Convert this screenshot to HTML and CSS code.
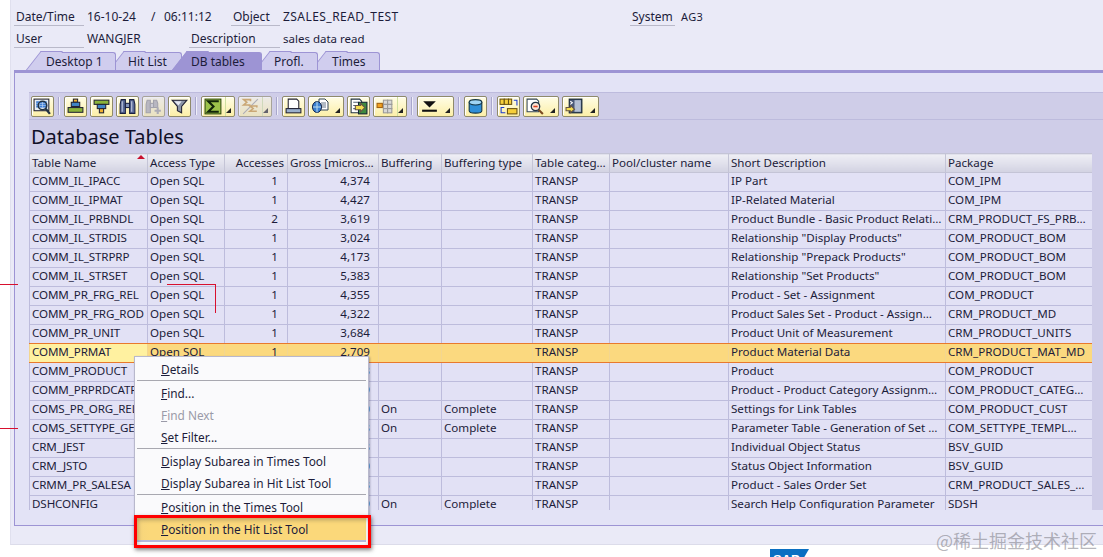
FILE: index.html
```html
<!DOCTYPE html>
<html lang="en">
<head>
<meta charset="utf-8">
<title>Database Tables</title>
<link rel="stylesheet" href="styles.css">
</head>
<body>
<div class="window">
  <header class="info">
    <div class="info-row">
      <span class="lbl w70">Date/Time</span><span class="val w64">16-10-24</span><span class="val w13">/</span><span class="val w67">06:11:12</span>
      <span class="lbl w49">Object</span><span class="val wide w349">ZSALES_READ_TEST</span>
      <span class="lbl w43">System</span><span class="val sys">AG3</span>
    </div>
    <div class="info-row">
      <span class="lbl w70">User</span><span class="val w102">WANGJER</span>
      <span class="lbl w91">Description</span><span class="val tight">sales data read</span>
    </div>
  </header>
  <nav class="tabs">
    <div class="tab t1"><span>Desktop 1</span></div>
    <div class="tab t2"><span>Hit List</span></div>
    <div class="tab t3 active"><span>DB tables</span></div>
    <div class="tab t4"><span>Profl.</span></div>
    <div class="tab t5"><span>Times</span></div>
  </nav>
  <section class="page">
    <div class="content">
      <div class="toolbar">
        <button class="tb"><svg width="19" height="17" viewBox="0 0 18 16"><rect x="1" y="1" width="14" height="11" fill="#e8eef4" stroke="#223" /><rect x="3" y="3" width="10" height="6" fill="#3f7fd6"/><path d="M3 5h10M3 7h10M6 3v6M9 3v6" stroke="#bcd4f2" stroke-width=".6"/><circle cx="9" cy="7" r="4" fill="none" stroke="#234" stroke-width="1.5"/><path d="M12 10l4 5" stroke="#234" stroke-width="2.200"/></svg></button>
        <i class="sep"></i>
        <button class="tb"><svg width="19" height="17" viewBox="0 0 18 16"><rect x="7" y="1" width="4" height="3" fill="#f0b030" stroke="#223"/><rect x="5" y="4" width="8" height="4" fill="#3f83c4" stroke="#223"/><rect x="2" y="9" width="14" height="4.500" fill="#8ab33a" stroke="#223"/></svg></button>
        <button class="tb"><svg width="19" height="17" viewBox="0 0 18 16"><rect x="2" y="2" width="14" height="4" fill="#8ab33a" stroke="#223"/><rect x="5" y="6" width="8" height="4" fill="#3f83c4" stroke="#223"/><rect x="7" y="10" width="4" height="4" fill="#f0b030" stroke="#223"/></svg></button>
        <button class="tb"><svg width="19" height="17" viewBox="0 0 18 16"><path d="M3 1.500h4v13H2V6zM11 1.500h4l1 4.500v8.500h-5z" fill="#5a6a9a" stroke="#1a2040"/><rect x="7" y="5" width="4" height="4" fill="#8090b8" stroke="#1a2040"/><path d="M4 3v10M13 3v10" stroke="#c4cce0"/></svg></button>
        <button class="tb off"><svg width="19" height="17" viewBox="0 0 18 16"><path d="M3 2h3v12H2V6zM9 2h3l1 3v4H9z" fill="#aaa" stroke="#888"/><rect x="6" y="5" width="3" height="4" fill="#ccc" stroke="#888"/><path d="M13 9v6M10 12h6" stroke="#999" stroke-width="2"/></svg></button>
        <button class="tb"><svg width="19" height="17" viewBox="0 0 18 16"><path d="M2 2h14l-5 6v6l-4-2V8z" fill="#8a94a8" stroke="#223"/><path d="M4 3h7l-3 4z" fill="#e6e9f2"/></svg></button>
        <i class="sep"></i>
        <button class="tb split"><span class="ico"><svg width="19" height="17" viewBox="0 0 18 16"><rect x="1" y="1" width="15" height="14" fill="#9cc24a" stroke="#2f4a10"/><path d="M13 4V3H4l5 5-5 5h9v-1" fill="none" stroke="#12250a" stroke-width="2"/></svg></span><span class="arrow"></span></button>
        <button class="tb split off"><span class="ico"><svg width="19" height="17" viewBox="0 0 18 16"><path d="M2 15L16 1" stroke="#999"/><path d="M9 3V1.500H2.500l3 2.500-3 2.500H9" fill="none" stroke="#c89030" stroke-width="1.500"/><path d="M15 9V7.500H8.500l3 2.500-3 2.500H15" fill="none" stroke="#c89030" stroke-width="1.500"/></svg></span><span class="arrow"></span></button>
        <i class="sep"></i>
        <button class="tb"><svg width="19" height="17" viewBox="0 0 18 16"><path d="M4 1h8l2 2v7H4z" fill="#fff" stroke="#223"/><rect x="2" y="10" width="14" height="4" fill="#9ab0cc" stroke="#223"/></svg></button>
        <button class="tb drop w36"><span class="ico"><svg width="20" height="16" viewBox="0 0 20 16"><path d="M8 1h6l3 3v8H8z" fill="#fff" stroke="#345"/><path d="M10 5h5M10 7h5M10 9h5" stroke="#678"/><ellipse cx="6" cy="9" rx="4.500" ry="5.500" fill="#3a7fd0" stroke="#124"/><path d="M6 3.500v11M2 9h8" stroke="#bde"/></svg></span><span class="arrow"></span></button>
        <button class="tb"><svg width="19" height="17" viewBox="0 0 18 16"><path d="M2 1h8l2 2v11H2z" fill="#fff" stroke="#234"/><path d="M4 4h5M4 7h3M4 10h3" stroke="#567"/><rect x="9" y="4" width="8" height="11" fill="#3f8a3f" stroke="#123"/><path d="M6 7h5V5l4 4-4 4v-2H6z" fill="#f4dd50" stroke="#654"/></svg></button>
        <button class="tb split w34"><span class="ico"><svg width="19" height="17" viewBox="0 0 18 16"><g fill="#d8d8d8" stroke="#999"><rect x="7" y="2" width="4" height="4"/><rect x="11" y="2" width="4" height="4"/><rect x="7" y="6" width="4" height="4"/><rect x="11" y="6" width="4" height="4"/><rect x="7" y="10" width="4" height="4"/><rect x="11" y="10" width="4" height="4"/></g><rect x="1" y="5" width="5" height="4" fill="#f0a020" stroke="#a06010"/></svg></span><span class="arrow"></span></button>
        <i class="sep"></i>
        <button class="tb drop w37"><span class="ico"><svg width="19" height="17" viewBox="0 0 18 16"><path d="M3 3h12L9 9z" fill="#111"/><rect x="2" y="11" width="14" height="2" fill="#111"/></svg></span><span class="arrow"></span></button>
        <i class="sep"></i>
        <button class="tb"><svg width="19" height="17" viewBox="0 0 18 16"><path d="M3 4v8c0 3 12 3 12 0V4z" fill="#2f8fd8" stroke="#134"/><ellipse cx="9" cy="4" rx="6" ry="2.500" fill="#9fd4f4" stroke="#134"/></svg></button>
        <i class="sep"></i>
        <button class="tb"><svg width="19" height="17" viewBox="0 0 18 16"><g fill="#f6cf3a" stroke="#6a5210"><rect x="1" y="1" width="4" height="5"/><rect x="5" y="1" width="4" height="5"/><rect x="9" y="1" width="3" height="5"/><rect x="8" y="10" width="9" height="5"/></g><path d="M14 2h3v5M5 9H2v5h4" fill="none" stroke="#1a3ad0"/></svg></button>
        <button class="tb drop w36"><span class="ico"><svg width="19" height="17" viewBox="0 0 18 16"><path d="M1 1h9l2 2v10H1z" fill="#fff" stroke="#345"/><circle cx="9" cy="8" r="4" fill="#fbe4d4" stroke="#234" stroke-width="1.200"/><path d="M7 8h4" stroke="#e04020" stroke-width="1.500"/><path d="M12 11l4 4" stroke="#7a4a20" stroke-width="2"/></svg></span><span class="arrow"></span></button>
        <button class="tb drop w37"><span class="ico"><svg width="19" height="17" viewBox="0 0 18 16"><rect x="4" y="1" width="12" height="13" fill="#4a5a78" stroke="#123"/><rect x="9" y="2" width="6" height="11" fill="#b4c0d4"/><path d="M1 9h4V7l4 3.500L5 14v-2H1z" fill="#f4dd50" stroke="#654"/><path d="M5 3l2 1.500L5 6" fill="none" stroke="#fff"/></svg></span><span class="arrow"></span></button>
      </div>
      <h1 class="title">Database Tables</h1>
      <div class="grid-wrap">
        <table class="grid">
          <colgroup>
            <col class="c1"><col class="c2"><col class="c3"><col class="c4"><col class="c5"><col class="c6"><col class="c7"><col class="c8"><col class="c9"><col class="c10">
          </colgroup>
          <thead>
            <tr>
              <th class="sorted">Table Name</th><th>Access Type</th><th class="r">Accesses</th><th>Gross [micros…</th><th>Buffering</th><th>Buffering type</th><th>Table categ…</th><th>Pool/cluster name</th><th>Short Description</th><th>Package</th>
            </tr>
          </thead>
          <tbody>
            <tr><td>COMM_IL_IPACC</td><td>Open SQL</td><td class="r acc">1</td><td class="r gr">4,374</td><td></td><td></td><td>TRANSP</td><td></td><td>IP Part</td><td>COM_IPM</td></tr>
            <tr><td>COMM_IL_IPMAT</td><td>Open SQL</td><td class="r acc">1</td><td class="r gr">4,427</td><td></td><td></td><td>TRANSP</td><td></td><td>IP-Related Material</td><td>COM_IPM</td></tr>
            <tr><td>COMM_IL_PRBNDL</td><td>Open SQL</td><td class="r acc">2</td><td class="r gr">3,619</td><td></td><td></td><td>TRANSP</td><td></td><td>Product Bundle - Basic Product Relati…</td><td>CRM_PRODUCT_FS_PRB…</td></tr>
            <tr><td>COMM_IL_STRDIS</td><td>Open SQL</td><td class="r acc">1</td><td class="r gr">3,024</td><td></td><td></td><td>TRANSP</td><td></td><td>Relationship "Display Products"</td><td>COM_PRODUCT_BOM</td></tr>
            <tr><td>COMM_IL_STRPRP</td><td>Open SQL</td><td class="r acc">1</td><td class="r gr">4,173</td><td></td><td></td><td>TRANSP</td><td></td><td>Relationship "Prepack Products"</td><td>COM_PRODUCT_BOM</td></tr>
            <tr><td>COMM_IL_STRSET</td><td>Open SQL</td><td class="r acc">1</td><td class="r gr">5,383</td><td></td><td></td><td>TRANSP</td><td></td><td>Relationship "Set Products"</td><td>COM_PRODUCT_BOM</td></tr>
            <tr><td>COMM_PR_FRG_REL</td><td>Open SQL</td><td class="r acc">1</td><td class="r gr">4,355</td><td></td><td></td><td>TRANSP</td><td></td><td>Product - Set - Assignment</td><td>COM_PRODUCT</td></tr>
            <tr><td>COMM_PR_FRG_ROD</td><td>Open SQL</td><td class="r acc">1</td><td class="r gr">4,322</td><td></td><td></td><td>TRANSP</td><td></td><td>Product Sales Set - Product - Assign…</td><td>CRM_PRODUCT_MD</td></tr>
            <tr class="presel"><td>COMM_PR_UNIT</td><td>Open SQL</td><td class="r acc">1</td><td class="r gr">3,684</td><td></td><td></td><td>TRANSP</td><td></td><td>Product Unit of Measurement</td><td>CRM_PRODUCT_UNITS</td></tr>
            <tr class="sel"><td>COMM_PRMAT</td><td>Open SQL</td><td class="r acc">1</td><td class="r gr">2,709</td><td></td><td></td><td>TRANSP</td><td></td><td>Product Material Data</td><td>CRM_PRODUCT_MAT_MD</td></tr>
            <tr><td>COMM_PRODUCT</td><td>Open SQL</td><td class="r acc">1</td><td class="r gr">3,583</td><td></td><td></td><td>TRANSP</td><td></td><td>Product</td><td>COM_PRODUCT</td></tr>
            <tr><td>COMM_PRPRDCATR</td><td>Open SQL</td><td class="r acc">1</td><td class="r gr">4,129</td><td></td><td></td><td>TRANSP</td><td></td><td>Product - Product Category Assignm…</td><td>COM_PRODUCT_CATEG…</td></tr>
            <tr><td>COMS_PR_ORG_REL</td><td>Open SQL</td><td class="r acc">1</td><td class="r gr">3,150</td><td>On</td><td>Complete</td><td>TRANSP</td><td></td><td>Settings for Link Tables</td><td>COM_PRODUCT_CUST</td></tr>
            <tr><td>COMS_SETTYPE_GEN</td><td>Open SQL</td><td class="r acc">1</td><td class="r gr">3,363</td><td>On</td><td>Complete</td><td>TRANSP</td><td></td><td>Parameter Table - Generation of Set …</td><td>COM_SETTYPE_TEMPL…</td></tr>
            <tr><td>CRM_JEST</td><td>Open SQL</td><td class="r acc">1</td><td class="r gr">3,473</td><td></td><td></td><td>TRANSP</td><td></td><td>Individual Object Status</td><td>BSV_GUID</td></tr>
            <tr><td>CRM_JSTO</td><td>Open SQL</td><td class="r acc">1</td><td class="r gr">2,950</td><td></td><td></td><td>TRANSP</td><td></td><td>Status Object Information</td><td>BSV_GUID</td></tr>
            <tr><td>CRMM_PR_SALESA</td><td>Open SQL</td><td class="r acc">1</td><td class="r gr">3,803</td><td></td><td></td><td>TRANSP</td><td></td><td>Product - Sales Order Set</td><td>CRM_PRODUCT_SALES_…</td></tr>
            <tr class="last"><td>DSHCONFIG</td><td>Open SQL</td><td class="r acc">1</td><td class="r gr">3,209</td><td>On</td><td>Complete</td><td>TRANSP</td><td></td><td>Search Help Configuration Parameter</td><td>SDSH</td></tr>
          </tbody>
        </table>
      </div>
    </div>
  </section>
</div>

<span class="mark m1"></span><span class="mark m2"></span><span class="mark m3"></span><span class="mark m4"></span>

<div class="menu">
  <div class="mi"><u>D</u>etails</div>
  <hr>
  <div class="mi"><u>F</u>ind...</div>
  <div class="mi dis"><u>F</u>ind Next</div>
  <div class="mi"><u>S</u>et Filter...</div>
  <hr>
  <div class="mi"><u>D</u>isplay Subarea in Times Tool</div>
  <div class="mi"><u>D</u>isplay Subarea in Hit List Tool</div>
  <hr>
  <div class="mi"><u>P</u>osition in the Times Tool</div>
  <div class="mi hot"><u>P</u>osition in the Hit List Tool</div>
</div>
<div class="redbox"></div>

<div class="sap"><span>SAP</span></div>
<div class="wm">@稀土掘金技术社区</div>
</body>
</html>
```

FILE: styles.css
```css
* { box-sizing: border-box; }
html, body { margin: 0; padding: 0; }
body {
  width: 1103px; height: 557px; overflow: hidden; background: #fff; position: relative;
  font-family: "Noto Sans", "Liberation Sans", sans-serif;
  font-size: 12px; color: #1c1c3a;
}
.window { margin-left: 10px; height: 545px; background: #eaeaf7; padding-top: 7px; border-bottom: 1px solid #dcdcea; border-left: 1px solid #e0e0ee; }
.info { height: 45px; padding-left: 3px; }
.info-row { display: flex; height: 22px; align-items: flex-start; }
.lbl { border-bottom: 1px solid #b9b9c9; height: 19px; padding-left: 2px; line-height: 19px; }
.val { padding-left: 3px; line-height: 19px; height: 19px; white-space: nowrap; }
.wide { letter-spacing: .45px; }
.tight { font-size: 11.5px; }
.w70 { width: 70px; } .w64 { width: 64px; } .w13 { width: 13px; } .w67 { width: 70px; }
.w49 { width: 49px; } .w349 { width: 350px; } .w43 { width: 45px; } .w102 { width: 105px; } .w91 { width: 91px; }
.sys { font-size: 11px; padding-left: 6px; letter-spacing: .4px; }
.tabs { display: flex; height: 18px; padding-left: 15px; position: relative; z-index: 1; }
.tab { position: relative; height: 18px; line-height: 20px; }
.tab::before { content: ""; position: absolute; inset: 0 0 0 20px; background: #d0cdee; border: 1px solid #9d94d4; border-left: 0; border-bottom: 0; border-radius: 0 3px 0 0; }
.tab::after { content: ""; position: absolute; left: 0; bottom: 0; width: 21px; height: 18px; background: #d0cdee; border-left: 1px solid #9d94d4; border-top: 1px solid #9d94d4; transform-origin: bottom left; transform: skewX(-38deg); }
.tab span { position: relative; z-index: 1; display: block; white-space: nowrap; }
.t1 { width: 90px; z-index: 5; } .t1 span { padding-left: 20px; }
.t2 { width: 73px; margin-left: -7px; z-index: 4; } .t2 span { padding-left: 19px; }
.t3 { width: 90px; margin-left: -10px; z-index: 6; } .t3 span { padding-left: 19px; }
.t4 { width: 63px; margin-left: -7px; z-index: 3; } .t4 span { padding-left: 19px; }
.t5 { width: 69px; margin-left: -7px; z-index: 2; } .t5 span { padding-left: 21px; }
.active::before, .active::after { background: #9d94d4; }
.page { margin-left: 3px; height: 456px; background: #e3e3f6; border: 1px solid #9d94d4; border-top: 3px solid #9d94d4; border-right: 0; padding: 19px 0 16px 14px; }
.content { height: 418px; background: #cfcde8; display: flex; flex-direction: column; }
.toolbar { height: 28px; display: flex; align-items: center; gap: 3px; padding: 0 0 0 2px; border-top: 1px solid #bdbbdd; border-bottom: 1px solid #bdbbdd; }
.tb { height: 21px; width: 23px; padding: 0; border: 1px solid #8f8a6a; border-radius: 2px; background: linear-gradient(#fffde6, #fcefa8); display: flex; align-items: center; justify-content: center; box-shadow: inset 1px 1px 0 #fff; position: relative; }
.tb svg { display: block; }
.off { opacity: .62; }
.split, .drop { width: 34px; justify-content: flex-start; padding-left: 2px; }
.w36 { width: 36px; } .w37 { width: 37px; } .w34 { width: 34px; }
.split .ico { width: 22px; border-right: 1px solid #cfe0a0; height: 19px; display: flex; align-items: center; }
.arrow { width: 0; height: 0; position: absolute; right: 3px; bottom: 3px; border-left: 5px solid transparent; border-bottom: 5px solid #222; }
.sep { width: 2px; height: 18px; background: #eeeef8; border-left: 1px solid #a9a7cc; margin: 0 1px; }
.title { margin: 0; height: 33px; font-size: 20px; font-weight: 400; line-height: 33px; padding-left: 2px; color: #111128; }
.grid-wrap { width: 1063px; flex: 1; overflow: hidden; }
.grid { width: 1063px; table-layout: fixed; border-collapse: collapse; font-size: 11.6px; }
.c1 { width: 118px; } .c2 { width: 77px; } .c3 { width: 63px; } .c4 { width: 91px; } .c5 { width: 63px; }
.c6 { width: 91px; } .c7 { width: 77px; } .c8 { width: 119px; } .c9 { width: 217px; } .c10 { width: 147px; }
th, td { overflow: hidden; white-space: nowrap; font-weight: 400; text-align: left; border: 1px solid #bdbcdc; }
th { height: 19px; padding: 0 3px 1px 2px; background: linear-gradient(#efeff5, #d2d2e2); border-color: #c4c4d6; line-height: 17px; }
td { height: 19px; padding: 0 3px 2px 2px; background: #e2e1f5; line-height: 16px; }
td:first-child { padding-right: 0; letter-spacing: -.1px; }
.r { text-align: right; }
td.acc { padding-right: 9px; }
td.gr { padding-right: 8px; }
.sorted { position: relative; }
.sorted::after { content: ""; position: absolute; right: 2px; top: 1px; border-left: 4px solid transparent; border-right: 4px solid transparent; border-bottom: 4px solid #c8102e; }
.presel td { border-bottom: 1px solid #e8792d; }
.sel td { background: #fbd97f; border-top: 1px solid #e8792d; border-bottom: 1px solid #e8792d; border-left-color: #f3d690; border-right-color: #f3d690; }
.sel td:first-child { background: #fff1a0; }
.mark { position: absolute; background: #d8102e; }
.m1 { left: 0; top: 284px; width: 18px; height: 1px; }
.m2 { left: 0; top: 428px; width: 18px; height: 1px; }
.m3 { left: 167px; top: 284px; width: 48px; height: 1px; }
.m4 { left: 215px; top: 284px; width: 1px; height: 29px; }
.menu { position: absolute; left: 134px; top: 356px; width: 235px; height: 190px; background: #fafafc; border: 1px solid #b8b8cc; padding: 1px 2px; box-shadow: 1px 1px 2px rgba(60,60,90,.4); font-size: 11.85px; }
.mi { height: 22px; line-height: 23px; padding-left: 24px; color: #1c1c3a; }
.dis { color: #9a9aa8; }
.hot { background: linear-gradient(90deg, #f6d57c 0, #fbd87a 6%, #fbd87a 100%); box-shadow: 0 2px 0 #b4b8dc; }
.menu hr { margin: 0 0 1px; border: 0; border-top: 1px solid #a8a8b0; height: 0; }
.redbox { position: absolute; left: 134px; top: 515px; width: 237px; height: 33px; border: 3px solid #f00; box-shadow: 1px 2px 4px rgba(30,30,30,.55), inset 1px 2px 4px rgba(60,60,60,.35); }
.sap { position: absolute; left: 770px; top: 549px; width: 39px; height: 20px; background: #0a6fc2; clip-path: polygon(0 0, 100% 0, 70% 100%, 0 100%); color: #fff; font: 700 13px "Liberation Sans", sans-serif; padding: 3px 0 0 3px; }
.wm { position: absolute; right: 6px; top: 530px; font: 18px/20px "Noto Sans CJK SC", sans-serif; color: rgba(120,120,130,.55); }
```
